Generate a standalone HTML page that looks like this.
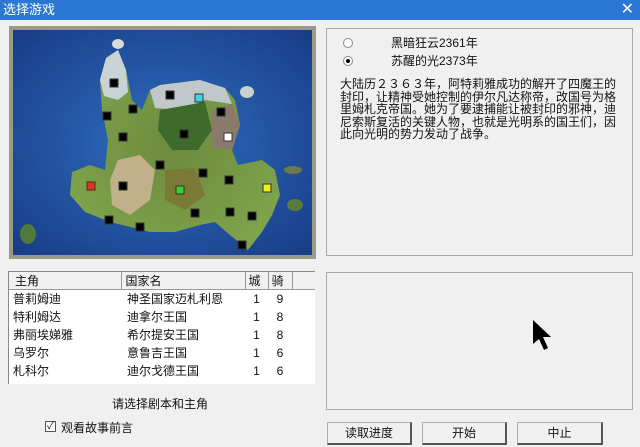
<!DOCTYPE html>
<html><head><meta charset="utf-8"><style>
*{margin:0;padding:0;box-sizing:border-box}
body{width:640px;height:447px;background:#f0f0f0;position:relative;overflow:hidden;font-family:"Liberation Sans","Noto Sans CJK SC","WenQuanYi Zen Hei",sans-serif;font-size:12px;color:#111}
.abs{position:absolute}
.title{left:0;top:0;width:640px;height:20px;background:#2b78d3;color:#fff;font-size:13px;line-height:19px;padding-left:3px}
.x{right:6px;top:0;color:#fff;font-size:16px;line-height:19px}
.panel{border:1px solid #a8a8a8;background:#f0f0f0}
.btn{height:23px;border:1px solid #adadad;border-right:2px solid #555;border-bottom:2px solid #555;background:#f0f0f0;text-align:center;line-height:20px;font-size:12px}
table{border-collapse:collapse}
</style></head><body>
<div class="abs title">选择游戏</div>
<div class="abs x">✕</div>

<svg class="abs" style="left:9px;top:26px" width="307" height="233" viewBox="9 26 307 233">
<defs><radialGradient id="oc" cx="0.5" cy="0.5" r="0.7"><stop offset="0" stop-color="#2f6ec0"/><stop offset="1" stop-color="#183c86"/></radialGradient>
<radialGradient id="ld" cx="0.5" cy="0.5" r="0.6"><stop offset="0" stop-color="#6d8a3e"/><stop offset="1" stop-color="#7fa54c"/></radialGradient></defs>
<rect x="9" y="26" width="307" height="233" fill="#9a9a88"/>
<rect x="13" y="30" width="299" height="225" fill="url(#oc)"/>
<path d="M106 58 L118 50 L126 70 L132 100 L142 110 L150 90 L160 85 L200 80 L225 88 L235 100 L240 125 L232 150 L238 165 L262 160 L275 170 L280 195 L272 215 L262 232 L248 250 L230 235 L215 222 L200 225 L175 232 L150 232 L135 228 L110 222 L85 212 L70 195 L72 172 L90 165 L105 170 L108 140 L102 110 L100 80 Z" fill="url(#ld)"/>
<path d="M106 58 L118 50 L126 70 L128 92 L118 100 L104 96 L100 80 Z" fill="#c9d3d6"/>
<path d="M150 90 L160 85 L200 80 L225 88 L232 104 L205 100 L180 110 L155 108 Z" fill="#c0c8cc"/>
<path d="M213 110 L232 104 L240 125 L232 150 L214 148 L210 130 Z" fill="#8a7a6c"/>
<path d="M160 110 L205 102 L212 130 L198 150 L172 150 L158 130 Z" fill="#3e6a2c"/>
<path d="M118 160 L140 155 L155 170 L150 200 L130 215 L112 205 L110 180 Z" fill="#c2b08a"/>
<path d="M165 170 L195 168 L205 195 L185 210 L165 200 Z" fill="#7a7a36"/>
<ellipse cx="118" cy="44" rx="6" ry="5" fill="#d8dcd8"/>
<ellipse cx="247" cy="92" rx="7" ry="6" fill="#c8d0d0"/>
<ellipse cx="28" cy="234" rx="8" ry="10" fill="#4e7a3a"/>
<ellipse cx="293" cy="170" rx="9" ry="4" fill="#6a7a4a"/>
<ellipse cx="295" cy="205" rx="8" ry="6" fill="#5a7a3e"/>
<g stroke="#333" stroke-width="1">
<g fill="#000">
<rect x="110" y="79" width="8" height="8"/><rect x="166" y="91" width="8" height="8"/><rect x="129" y="105" width="8" height="8"/><rect x="103" y="112" width="8" height="8"/><rect x="217" y="108" width="8" height="8"/><rect x="119" y="133" width="8" height="8"/><rect x="180" y="130" width="8" height="8"/><rect x="156" y="161" width="8" height="8"/><rect x="199" y="169" width="8" height="8"/><rect x="225" y="176" width="8" height="8"/><rect x="119" y="182" width="8" height="8"/><rect x="191" y="209" width="8" height="8"/><rect x="226" y="208" width="8" height="8"/><rect x="248" y="212" width="8" height="8"/><rect x="105" y="216" width="8" height="8"/><rect x="136" y="223" width="8" height="8"/><rect x="238" y="241" width="8" height="8"/>
</g>
<rect x="195" y="94" width="8" height="8" fill="#3fd6e6"/>
<rect x="224" y="133" width="8" height="8" fill="#fff"/>
<rect x="87" y="182" width="8" height="8" fill="#e8301a"/>
<rect x="176" y="186" width="8" height="8" fill="#38d02a"/>
<rect x="263" y="184" width="8" height="8" fill="#f2ee1a"/>
</g>
</svg>

<div class="abs panel" style="left:326px;top:28px;width:307px;height:228px"></div>
<div class="abs" style="left:343px;top:38px;width:10px;height:10px;border-radius:50%;border:1px solid #888;background:#fff"></div>
<div class="abs" style="left:343px;top:56px;width:10px;height:10px;border-radius:50%;border:1px solid #888;background:#fff"><div style="margin:2px 0 0 2px;width:4px;height:4px;border-radius:50%;background:#000"></div></div>
<div class="abs" style="left:391px;top:35px;font-size:12px;line-height:16px">黑暗狂云2361年</div>
<div class="abs" style="left:391px;top:53px;font-size:12px;line-height:16px">苏醒的光2373年</div>
<div class="abs" style="left:340px;top:78px;width:300px;font-size:12px;line-height:12.6px;white-space:nowrap">大陆历２３６３年，阿特莉雅成功的解开了四魔王的<br>封印，让精神受她控制的伊尔凡达称帝，改国号为格<br>里姆札克帝国。她为了要逮捕能让被封印的邪神，迪<br>尼索斯复活的关键人物，也就是光明系的国王们，因<br>此向光明的势力发动了战争。</div>

<div class="abs" style="left:8px;top:271px;width:307px;height:113px;background:#fff;border-left:1px solid #888;border-top:1px solid #888">
<table style="font-size:12px;width:100%">
<tr style="height:16px;background:#f0f0f0"><td style="width:112px;border-right:1px solid #999;border-bottom:1px solid #999;padding-left:6px">主角</td><td style="width:124px;border-right:1px solid #999;border-bottom:1px solid #999;padding-left:4px">国家名</td><td style="width:23px;border-right:1px solid #999;border-bottom:1px solid #999;padding-left:3px">城</td><td style="width:24px;border-right:1px solid #999;border-bottom:1px solid #999;padding-left:3px">骑</td><td style="border-bottom:1px solid #999"></td></tr>
<tr style="height:18px"><td style="padding-left:4px">普莉姆迪</td><td style="padding-left:6px">神圣国家迈札利恩</td><td style="text-align:center">1</td><td style="text-align:center">9</td><td></td></tr>
<tr style="height:18px"><td style="padding-left:4px">特利姆达</td><td style="padding-left:6px">迪拿尔王国</td><td style="text-align:center">1</td><td style="text-align:center">8</td><td></td></tr>
<tr style="height:18px"><td style="padding-left:4px">弗丽埃娣雅</td><td style="padding-left:6px">希尔提安王国</td><td style="text-align:center">1</td><td style="text-align:center">8</td><td></td></tr>
<tr style="height:18px"><td style="padding-left:4px">乌罗尔</td><td style="padding-left:6px">意鲁吉王国</td><td style="text-align:center">1</td><td style="text-align:center">6</td><td></td></tr>
<tr style="height:18px"><td style="padding-left:4px">札科尔</td><td style="padding-left:6px">迪尔戈德王国</td><td style="text-align:center">1</td><td style="text-align:center">6</td><td></td></tr>
</table></div>

<div class="abs" style="left:0;width:320px;top:395px;text-align:center;font-size:12px">请选择剧本和主角</div>
<div class="abs" style="left:45px;top:421px;width:11px;height:11px;border:1px solid #555;background:#fff;font-size:10px;line-height:9px;text-align:center">✓</div>
<div class="abs" style="left:61px;top:419px;font-size:12px">观看故事前言</div>

<div class="abs panel" style="left:326px;top:272px;width:307px;height:138px"></div>
<svg class="abs" style="left:530px;top:318px" width="28" height="36"><path d="M3 2 L3 26 L9 21 L14 32 L18 30 L13 19 L21 19 Z" fill="#000"/></svg>

<div class="abs btn" style="left:327px;top:422px;width:85px">读取进度</div>
<div class="abs btn" style="left:422px;top:422px;width:85px">开始</div>
<div class="abs btn" style="left:517px;top:422px;width:86px">中止</div>
</body></html>
